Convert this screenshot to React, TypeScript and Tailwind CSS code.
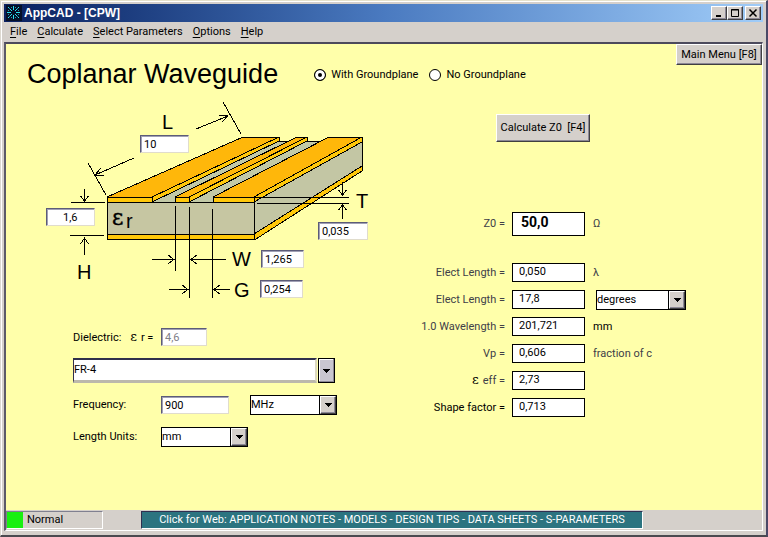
import { clsx } from 'clsx'
import type { ComponentProps, ReactNode } from 'react'

const MENUS = ['File', 'Calculate', 'Select Parameters', 'Options', 'Help']

const RAISED = 'border border-t-white border-l-white border-r-[#404040] border-b-[#404040] bg-[#d5d0cb] shadow-[inset_-1px_-1px_0_#8c8896]'
const SUNKEN = 'border border-t-[#5c5c78] border-l-[#5c5c78] border-r-[#e0dccc] border-b-[#e0dccc] bg-white shadow-[inset_1px_1px_0_#a0a0b4]'

function Field({ className, ...props }: ComponentProps<'input'>) {
  return <input type="text" className={clsx('h-[18px] px-[3px] leading-[14px] outline-none', SUNKEN, className)} {...props} />
}

function Arrow() {
  return (
    <svg width="7" height="4" viewBox="0 0 7 4" shapeRendering="crispEdges">
      <path d="M0 0h7v1h-1v1h-1v1h-1v1h-1v-1h-1v-1h-1v-1h-1z" fill="#000" />
    </svg>
  )
}

function Combo({ id, label, value, className }: { id?: string; label?: string; value: string; className: string }) {
  return (
    <div className={clsx('flex h-5 border border-black bg-white', className)}>
      <select id={id} aria-label={label} defaultValue={value} className="min-w-0 flex-1 appearance-none border-r border-black bg-white outline-none">
        <option>{value}</option>
      </select>
      <span className={clsx('pointer-events-none flex w-4 items-center justify-center', RAISED)}>
        <Arrow />
      </span>
    </div>
  )
}

function Result({ id, label, value, unit, dark }: { id: string; label: ReactNode; value: string; unit?: ReactNode; dark?: boolean }) {
  return (
    <>
      <label htmlFor={id} className={clsx('text-right whitespace-nowrap', dark ? 'text-black' : 'text-[#404048]')}>
        {label} =
      </label>
      <input id={id} readOnly value={value} className="h-[19px] w-full border border-black bg-white px-1.5 pb-[2px] outline-none" />
      <div className="pl-[1px] whitespace-nowrap text-[#404048]">{unit}</div>
    </>
  )
}

function Burst() {
  return (
    <svg width="16" height="16" viewBox="0 0 16 16" className="ml-[2px]" aria-hidden="true" shapeRendering="crispEdges">
      <path d="M0 0H16V16H0Z" fill="#061028" />
      <g fill="#28e0f0">
        <path d="M7 1h1v4H7zM7 10h1v4H7zM1 7h4v1H1zM10 7h4v1h-4z" />
        <path d="M5 5h1v1H5zM4 4h1v1H4zM2 2h1v1H2zM9 5h1v1H9zM10 4h1v1h-1zM12 2h1v1h-1zM5 9h1v1H5zM4 10h1v1H4zM2 12h1v1H2zM9 9h1v1H9zM10 10h1v1h-1zM12 12h1v1h-1z" />
      </g>
      <g fill="#209cb4">
        <path d="M5 2h1v1H5zM9 2h1v1H9zM5 12h1v1H5zM9 12h1v1H9zM2 5h1v1H2zM12 5h1v1h-1zM2 9h1v1H2zM12 9h1v1h-1zM3 3h1v1H3zM11 3h1v1h-1zM3 11h1v1H3zM11 11h1v1h-1z" />
      </g>
    </svg>
  )
}

function WindowButton({ label, className, children }: { label: string; className?: string; children: ReactNode }) {
  return (
    <button type="button" aria-label={label} className={clsx('flex h-[14px] w-4 items-center justify-center', RAISED, className)}>
      <svg width="10" height="10" viewBox="0 0 10 10" fill="none" stroke="#000">{children}</svg>
    </button>
  )
}

function Board() {
  return (
    <div className="relative h-[210px] w-[340px]">
      <svg width="340" height="210" viewBox="40 95 340 210" aria-hidden="true">
        <g stroke="#000" strokeWidth="1" strokeLinejoin="round" shapeRendering="crispEdges">
          {/* substrate */}
          <path d="M107 202L243 141H362L254 202Z" fill="#c2c9a6" />
          <path d="M254 202L362 141V166L254 234Z" fill="#c3c6a4" />
          <path d="M107 202H254V234H107Z" fill="#c6c6a2" />
          {/* ground plane */}
          <path d="M107 234H254V239H107Z" fill="#ffc80a" />
          <path d="M254 234L362 166V171L256 239H254Z" fill="#ffc80a" />
          {/* left ground */}
          <path d="M152 197L279 137V141L152 202Z" fill="#ffc80a" />
          <path d="M107 197L243 137H279L152 197Z" fill="#ffb70a" />
          <path d="M107 197H152V202H107Z" fill="#ffc80a" />
          {/* centre strip */}
          <path d="M189 197L307 137V141L189 202Z" fill="#ffc80a" />
          <path d="M175 197L297 137H307L189 197Z" fill="#ffb70a" />
          <path d="M175 197H189V202H175Z" fill="#ffc80a" />
          {/* right ground */}
          <path d="M254 197L362 137V142L254 202Z" fill="#ffc80a" />
          <path d="M213 197L329 137H362L254 197Z" fill="#ffb70a" />
          <path d="M213 197H254V202H213Z" fill="#ffc80a" />
        </g>
        <g stroke="#000" fill="none" shapeRendering="crispEdges">
          {/* length */}
          <path d="M134 158L95 175M101 168L95 175L104 176" />
          <path d="M88 163L106 195" />
          <path d="M196 129L228 116M219 115L228 116L222 122" />
          <path d="M223 102L241 134" />
          {/* height */}
          <path d="M71 202.500H105M70 235.500H104" />
          <path d="M84.500 189V201M80.500 196L84.500 201L88.500 196M84.500 255V238M80.500 244L84.500 238L88.500 244" />
          {/* width and gap */}
          <path d="M175.500 206V271M189.500 207V298M212.500 209V298" />
          <path d="M152 259.500H174M168 255L174 259.500L168 264M226 259.500H191M197 255L191 259.500L197 264" />
          <path d="M169 289.500H188M182 285L188 289.500L182 294M230 289.500H214M220 285L214 289.500L220 294" />
          {/* thickness */}
          <path d="M254 197.500H349M257 203.500H349" />
          <path d="M342.500 182V195M338.500 190L342.500 195L346.500 190M342.500 219V205M338.500 210L342.500 205L346.500 210" />
        </g>
        <g fontFamily="'Liberation Sans', Arial, sans-serif" fontSize="20">
          <text x="162" y="129">L</text>
          <text x="77" y="279">H</text>
          <text x="232" y="266">W</text>
          <text x="234" y="297">G</text>
          <text x="356" y="208">T</text>
          <text x="126" y="228">r</text>
          <text x="112" y="225" fontSize="22" fontFamily="'DejaVu Serif', serif" stroke="#000" strokeWidth=".4">ε</text>
        </g>
      </svg>
      <Field aria-label="L" defaultValue="10" className="absolute top-[40px] left-[100px] w-[49px]" />
      <Field aria-label="H" defaultValue="1,6" className="absolute top-[113px] left-[6px] w-[49px] pl-4" />
      <Field aria-label="T" defaultValue="0,035" className="absolute top-[127px] left-[278px] w-[50px]" />
      <Field aria-label="W" defaultValue="1,265" className="absolute top-[155px] left-[221px] w-[43px]" />
      <Field aria-label="G" defaultValue="0,254" className="absolute top-[185px] left-[220px] w-[43px]" />
    </div>
  )
}

const Epsilon = () => <span className="mr-1 font-['DejaVu_Serif',serif] text-[13px] text-black">ε</span>

export default function App() {
  return (
    <div className="flex min-h-screen flex-col border-t border-r-2 border-b-2 border-l border-t-[#e6e2cc] border-r-[#4a4866] border-b-[#4a4a50] border-l-[#dcd8d0] bg-[#d5d0cb] px-[3px] pt-[3px] pb-1 font-[Roboto,sans-serif] text-[11px] leading-[14px] text-black shadow-[inset_1px_1px_0_white]">
      <header className="flex h-[18px] items-center bg-linear-to-r from-[#0a2060] via-[#4a7ac0] to-[#a0ccf8] pr-[2px]">
        <Burst />
        <span className="ml-[2px] font-['Liberation_Sans',Arial,sans-serif] text-[12px] font-bold text-white">AppCAD - [CPW]</span>
        <div className="ml-auto flex">
          <WindowButton label="Minimize"><path d="M2 8H7" strokeWidth="2" /></WindowButton>
          <WindowButton label="Maximize"><path d="M1.500 1.500H8.500V8.500H1.500ZM1 2H9" /></WindowButton>
          <WindowButton label="Close" className="ml-[2px]"><path d="M1.500 1.500L8.500 8.500M8.500 1.500L1.500 8.500" strokeWidth="1.500" /></WindowButton>
        </div>
      </header>

      <nav className="flex h-5 items-center gap-2.5 pl-1.5">
        {MENUS.map((name) => (
          <button key={name} type="button">
            <span className="underline underline-offset-2">{name[0]}</span>
            {name.slice(1)}
          </button>
        ))}
      </nav>

      <div className="flex flex-1 flex-col border-t-2 border-r border-b border-l-2 border-t-[#4c4a5c] border-r-white border-b-white border-l-[#5c5a68]">
        <main className="flex-1 bg-[#ffffaa] pb-8">
          <div className="flex h-[51px] items-start pl-[21px]">
            <h1 className="mt-4 font-['Liberation_Sans',Arial,sans-serif] text-[27px] leading-7 whitespace-nowrap">Coplanar Waveguide</h1>
            <div className="mt-6 ml-9 flex gap-[11px] whitespace-nowrap">
              <label className="flex items-center gap-[5px]">
                <input type="radio" name="plane" defaultChecked className="size-3 appearance-none rounded-full border border-black bg-white checked:bg-black checked:shadow-[inset_0_0_0_3px_white]" />
                With Groundplane
              </label>
              <label className="flex items-center gap-[5px]">
                <input type="radio" name="plane" className="size-3 appearance-none rounded-full border border-black bg-white checked:bg-black checked:shadow-[inset_0_0_0_3px_white]" />
                No Groundplane
              </label>
            </div>
            <button type="button" className={clsx('ml-auto h-[21px] w-[86px] whitespace-nowrap', RAISED)}>Main Menu [F8]</button>
          </div>

          <div className="grid grid-cols-[394px_1fr]">
            <section className="pl-[34px]">
              <Board />
              <div className="mt-[23px] ml-[33px] flex flex-col gap-3">
                <div className="flex items-center">
                  <label htmlFor="er" className="w-[88px] whitespace-nowrap">
                    Dielectric: <span className="ml-1.5"><Epsilon /></span>r =
                  </label>
                  <Field id="er" disabled defaultValue="4,6" className="w-[46px] text-[#808088]" />
                </div>
                <div className="flex h-[25px] w-[262px]">
                  <select aria-label="Dielectric material" defaultValue="FR-4" className="mr-px min-w-0 flex-1 appearance-none border-t-2 border-r-2 border-b-3 border-l border-t-[#30304c] border-r-[#dcd8c0] border-b-[#bcb8ac] border-l-[#30304c] bg-white outline-none">
                    <option>FR-4</option>
                  </select>
                  <span className="pointer-events-none flex w-[17px] items-center justify-center border border-black bg-[#c9c6d0] shadow-[inset_-1px_-1px_0_#8c8896,inset_1px_1px_0_white]">
                    <Arrow />
                  </span>
                </div>
                <div className="flex items-center">
                  <label htmlFor="freq" className="w-[88px]">Frequency:</label>
                  <Field id="freq" defaultValue="900" className="w-[68px]" />
                  <Combo label="Frequency unit" value="MHz" className="ml-[21px] w-[87px]" />
                </div>
                <div className="flex items-center">
                  <label htmlFor="units" className="w-[88px]">Length Units:</label>
                  <Combo id="units" value="mm" className="w-[87px]" />
                </div>
              </div>
            </section>

            <section>
              <button type="button" className={clsx('mt-[19px] ml-24 h-7 w-[94px] whitespace-pre', RAISED)}>{'Calculate Z0  [F4]'}</button>
              <div className="mt-[70px] grid grid-cols-[105px_73px_1fr] items-center gap-x-[7px] gap-y-2">
                <label htmlFor="z0" className="mb-[19px] text-right text-[#404048]">Z0 =</label>
                <input id="z0" readOnly value="50,0" className="mb-[19px] h-6 w-full border border-black bg-white px-2 pb-1 text-[14px] font-bold outline-none" />
                <div className="mb-[19px] pl-[1px] text-[#404048]">Ω</div>
                <Result id="el" label="Elect Length" value="0,050" unit="λ" />
                <Result id="eld" label="Elect Length" value="17,8" unit={<Combo label="Angle unit" value="degrees" className="-my-px ml-[3px] w-[90px] text-black" />} />
                <Result id="wl" label="1.0 Wavelength" value="201,721" unit={<span className="text-black">mm</span>} />
                <Result id="vp" label="Vp" value="0,606" unit="fraction of c" />
                <Result id="eeff" label={<><Epsilon />eff</>} value="2,73" />
                <Result id="shape" label="Shape factor" value="0,713" dark />
              </div>
            </section>
          </div>
        </main>

        <footer className="flex h-5 items-center bg-[#d5d0cb]">
          <div className="flex h-[18px] w-[97px] items-center border border-t-[#808090] border-r-white border-b-white border-l-[#808090]">
            <span className="size-4 bg-[#18f010]" />
            <span className="ml-1">Normal</span>
          </div>
          <a href="#web" className="ml-[38px] h-[18px] w-[502px] border border-t-[#303050] border-r-white border-b-white border-l-[#303050] bg-[#2c7480] text-center leading-[15px] whitespace-nowrap text-white">
            Click for Web: APPLICATION NOTES - MODELS - DESIGN TIPS - DATA SHEETS - S-PARAMETERS
          </a>
        </footer>
      </div>
    </div>
  )
}
